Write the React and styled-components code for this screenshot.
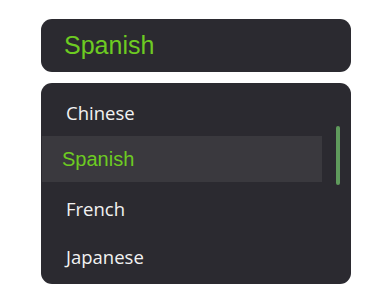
import React from 'react';
import styled, { createGlobalStyle } from 'styled-components';

const GlobalStyle = createGlobalStyle`
  html, body {
    margin: 0;
    padding: 0;
    background: #ffffff;
  }
`;

const Page = styled.div`
  width: 392px;
  height: 296px;
  padding: 19px 41px 0 41px;
  box-sizing: border-box;
  display: flex;
  flex-direction: column;
  gap: 11px;
`;

const Selected = styled.div`
  height: 53px;
  border-radius: 11px;
  background: #2b2a30;
  display: flex;
  align-items: center;
  padding-left: 23px;
  font-family: "Liberation Sans", Arial, sans-serif;
  font-size: 25px;
  color: #6dcb22;
`;

const ListBox = styled.div`
  position: relative;
  height: 201px;
  border-radius: 11px;
  background: #2b2a30;
  padding: 5px 29px 0 1px;
  box-sizing: border-box;
  overflow: hidden;
`;

const Item = styled.div`
  height: ${p => (p.$active ? '46px' : '48px')};
  display: flex;
  align-items: center;
  padding-left: ${p => (p.$active ? '20px' : '24px')};
  background: ${p => (p.$active ? '#3a393e' : 'transparent')};
  color: ${p => (p.$active ? '#6dcb22' : '#f2f2f2')};
  font-family: ${p => (p.$active ? '"Liberation Sans", Arial, sans-serif' : '"Open Sans", "Noto Sans", sans-serif')};
  font-size: ${p => (p.$active ? '20px' : '18.5px')};
  margin-bottom: ${p => (p.$active ? '2px' : '0')};
`;

const Thumb = styled.div`
  position: absolute;
  left: 295px;
  top: 43px;
  width: 4px;
  height: 59px;
  border-radius: 2px;
  background: #5f9a5c;
`;

const languages = ['Chinese', 'Spanish', 'French', 'Japanese'];

export default function App() {
  const current = 'Spanish';
  return (
    <>
      <GlobalStyle />
      <Page>
        <Selected>{current}</Selected>
        <ListBox>
          {languages.map(lang => (
            <Item key={lang} $active={lang === current}>{lang}</Item>
          ))}
          <Thumb />
        </ListBox>
      </Page>
    </>
  );
}
